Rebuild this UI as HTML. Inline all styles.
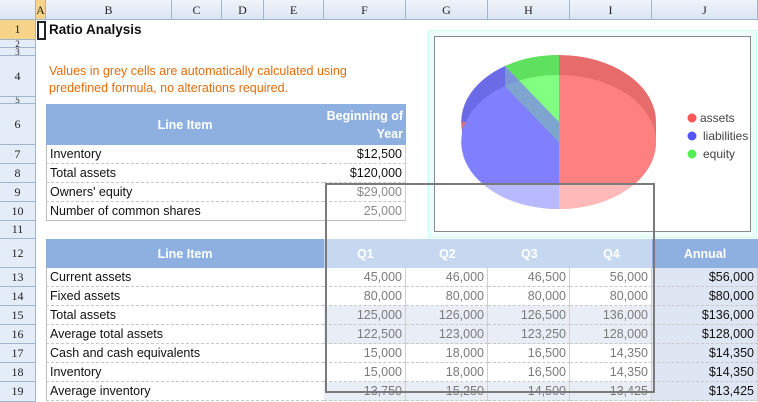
<!DOCTYPE html>
<html><head><meta charset="utf-8"><style>
*{margin:0;padding:0;box-sizing:border-box}
body{width:758px;height:402px;overflow:hidden;background:#fff;font-family:"Liberation Sans",sans-serif;position:relative}
.a{position:absolute}
.ch{position:absolute;top:0;height:20px;background:linear-gradient(#f0f4fa,#dbe5f3);border-right:1px solid #9eb6ce;border-bottom:1px solid #9eb6ce;font-family:"Liberation Serif",serif;font-size:12px;text-align:center;line-height:20px;color:#222}
.rh{position:absolute;left:0;width:36px;background:#e4ecf7;border-right:1px solid #9eb6ce;border-bottom:1px solid #9eb6ce;font-family:"Liberation Serif",serif;font-size:12px;text-align:center;color:#222;display:flex;align-items:center;justify-content:center;overflow:hidden}
.c{position:absolute;font-size:12.5px;height:19px;line-height:19px;white-space:nowrap;color:#111;border-bottom:1px dashed #c8c8c8;overflow:hidden}
.r{text-align:right;padding-right:3px;border-right:1px solid #d0d0d0}
.g{color:#8a8a8a}
.l{padding-left:3px;border-left:1px solid #bbb}
.hd{position:absolute;background:#8db0e0;color:#fff;font-weight:bold;font-size:12.5px;text-align:center;display:flex;align-items:center;justify-content:center}
</style></head><body>
<!-- corner & column headers -->
<div class="ch" style="left:0;width:36px"></div>
<div class="ch" style="left:36px;width:10px;background:#f8d48a">A</div>
<div class="ch" style="left:46px;width:126px">B</div>
<div class="ch" style="left:172px;width:50px">C</div>
<div class="ch" style="left:222px;width:42px">D</div>
<div class="ch" style="left:264px;width:60px">E</div>
<div class="ch" style="left:324px;width:82px">F</div>
<div class="ch" style="left:406px;width:82px">G</div>
<div class="ch" style="left:488px;width:82px">H</div>
<div class="ch" style="left:570px;width:82px">I</div>
<div class="ch" style="left:652px;width:106px">J</div>
<!-- row headers -->
<div class="rh" style="top:20px;height:20px;background:#f8d48a">1</div>
<div class="rh" style="top:40px;height:8px;font-size:9px">2</div>
<div class="rh" style="top:48px;height:8px;font-size:9px">3</div>
<div class="rh" style="top:56px;height:41px">4</div>
<div class="rh" style="top:97px;height:7px;font-size:9px">5</div>
<div class="rh" style="top:104px;height:41px">6</div>
<div class="rh" style="top:145px;height:19px">7</div>
<div class="rh" style="top:164px;height:19px">8</div>
<div class="rh" style="top:183px;height:19px">9</div>
<div class="rh" style="top:202px;height:19px">10</div>
<div class="rh" style="top:221px;height:18px">11</div>
<div class="rh" style="top:239px;height:29px">12</div>
<div class="rh" style="top:268px;height:19px">13</div>
<div class="rh" style="top:287px;height:19px">14</div>
<div class="rh" style="top:306px;height:19px">15</div>
<div class="rh" style="top:325px;height:19px">16</div>
<div class="rh" style="top:344px;height:19px">17</div>
<div class="rh" style="top:363px;height:19px">18</div>
<div class="rh" style="top:382px;height:20px">19</div>

<!-- active cell -->
<div class="a" style="left:37px;top:21px;width:9px;height:19px;border:2px solid #222"></div>
<div class="a" style="left:49px;top:22px;font-size:13.5px;font-weight:bold;color:#111">Ratio Analysis</div>
<div class="a" style="left:49px;top:63px;font-size:12.5px;line-height:17px;color:#e46c0a">Values in grey cells are automatically calculated using<br>predefined formula, no alterations required.</div>

<!-- table 1 -->
<div class="hd" style="left:46px;top:104px;width:278px;height:41px">Line Item</div>
<div class="hd" style="left:324px;top:104px;width:82px;height:41px;line-height:18px;text-align:right;justify-content:flex-end;padding-right:3px">Beginning of<br>Year</div>
<div class="c l" style="left:46px;top:145px;width:278px">Inventory</div><div class="c r" style="left:324px;top:145px;width:82px">$12,500</div>
<div class="c l" style="left:46px;top:164px;width:278px">Total assets</div><div class="c r" style="left:324px;top:164px;width:82px">$120,000</div>
<div class="c l" style="left:46px;top:183px;width:278px">Owners' equity</div><div class="c r g" style="left:324px;top:183px;width:82px">$29,000</div>
<div class="c l" style="left:46px;top:202px;width:278px;border-bottom:1px solid #bbb">Number of common shares</div><div class="c r g" style="left:324px;top:202px;width:82px;border-bottom:1px solid #bbb">25,000</div>

<!-- chart -->
<div class="a" style="left:428px;top:30px;width:329px;height:208px;background:#effcfc;border:1px solid #cfe"></div>
<div class="a" style="left:434px;top:36px;width:317px;height:196px;background:#fff;border:1px solid #888"></div>
<svg class="a" style="left:0;top:0" width="758" height="402">
 <!-- side / back darker -->
 <path d="M559 122 L559 55 A97 67 0 0 1 559 189 Z" fill="#e86b6b"/>
 <path d="M559 122 L559 189 A97 67 0 0 1 505 66 Z" fill="#6b6be8"/>
 <path d="M559 122 L505 66 A97 67 0 0 1 559 55 Z" fill="#5fe05f"/>
 <!-- lower depth (lighter) -->
 <path d="M462 122 L462 142 A97 67 0 0 0 656 142 L656 122 Z" fill="#e07070"/>
 <path d="M462 122 L462 142 A97 67 0 0 0 559 209 L559 189 A97 67 0 0 1 462 122Z" fill="#7070e0"/>
 <!-- top face -->
 <path d="M559 142 L559 75 A97 67 0 0 1 559 209 Z" fill="#ff8080"/>
 <path d="M559 142 L559 209 A97 67 0 0 1 505 86 Z" fill="#8080ff"/>
 <path d="M559 142 L505 86 A97 67 0 0 1 559 75 Z" fill="#80ff80"/>
 <path d="M505 66 L505 86 L559 142 L559 122 Z" fill="#7e9ad8" opacity=".9"/>
 <rect x="462" y="185" width="196" height="30" fill="#fff" opacity=".45"/>
 <circle cx="692" cy="118" r="4.5" fill="#f55"/>
 <circle cx="692" cy="136" r="4.5" fill="#55f"/>
 <circle cx="692" cy="154" r="4.5" fill="#5e5"/>
 <text x="700" y="122" font-size="12" fill="#444" font-family="Liberation Sans">assets</text>
 <text x="703" y="140" font-size="12" fill="#444" font-family="Liberation Sans">liabilities</text>
 <text x="703" y="158" font-size="12" fill="#444" font-family="Liberation Sans">equity</text>
</svg>

<!-- table 2 header -->
<div class="hd" style="left:46px;top:239px;width:278px;height:29px">Line Item</div>
<div class="hd" style="left:324px;top:239px;width:328px;height:29px;background:#c6d8ef;justify-content:flex-start">
 <span style="position:absolute;left:33px">Q1</span><span style="position:absolute;left:115px">Q2</span><span style="position:absolute;left:197px">Q3</span><span style="position:absolute;left:279px">Q4</span></div>
<div class="hd" style="left:652px;top:239px;width:106px;height:29px">Annual</div>

<div id="t2"></div>
<script>
var rows=[["Current assets","45,000","46,000","46,500","56,000","$56,000",0],
["Fixed assets","80,000","80,000","80,000","80,000","$80,000",0],
["Total assets","125,000","126,000","126,500","136,000","$136,000",1],
["Average total assets","122,500","123,000","123,250","128,000","$128,000",1],
["Cash and cash equivalents","15,000","18,000","16,500","14,350","$14,350",0],
["Inventory","15,000","18,000","16,500","14,350","$14,350",0],
["Average inventory","13,750","15,250","14,500","13,425","$13,425",1]];
var h="";
rows.forEach(function(r,i){var t=268+i*19;var bg=r[6]?"#e9eef6":"#fff";
h+='<div class="c l" style="left:46px;top:'+t+'px;width:278px">'+r[0]+'</div>';
for(var k=0;k<4;k++)h+='<div class="c r g" style="left:'+(324+k*82)+'px;top:'+t+'px;width:82px;background:'+bg+';color:#7a7a7a">'+r[k+1]+'</div>';
h+='<div class="c r" style="left:652px;top:'+t+'px;width:106px;background:#dde6f2">'+r[5]+'</div>';});
document.getElementById("t2").innerHTML=h;
</script>
<!-- selection rect -->
<div class="a" style="left:325px;top:183px;width:330px;height:210px;border:2px solid #7a7a7a"></div>
</body></html>
